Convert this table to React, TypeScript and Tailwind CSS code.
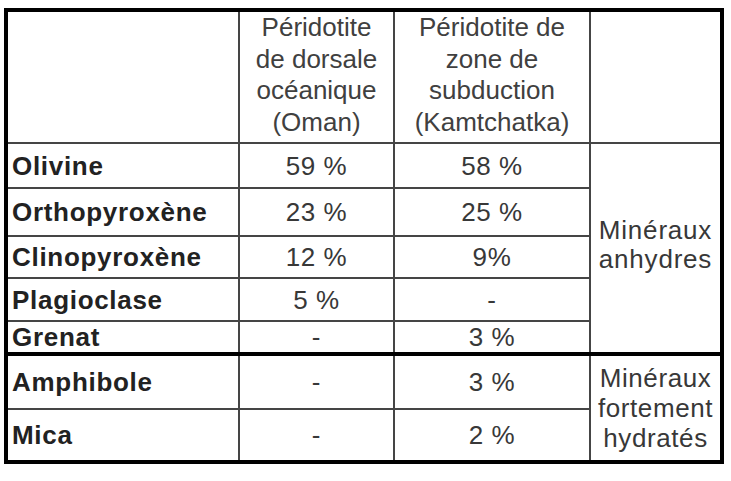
const rows = [
  { name: "Olivine", oman: "59 %", kam: "58 %", h: "h-[45px]" },
  { name: "Orthopyroxène", oman: "23 %", kam: "25 %", h: "h-[48px]" },
  { name: "Clinopyroxène", oman: "12 %", kam: "9%", h: "h-[42px]" },
  { name: "Plagioclase", oman: "5 %", kam: "-", h: "h-[43px]" },
  { name: "Grenat", oman: "-", kam: "3 %", h: "h-[33px]" },
];

const hydrated = [
  { name: "Amphibole", oman: "-", kam: "3 %", h: "h-[55px]" },
  { name: "Mica", oman: "-", kam: "2 %", h: "h-[53px]" },
];

const cell = "border-2 border-[#454545] p-0";
const label = "pl-[4px] text-left font-bold text-[#222] tracking-[0.7px]";
const value = "text-center text-[#383838] tracking-[0.6px]";

export default function App() {
  return (
    <div className="w-[731px] h-[481px] bg-white pl-[4px] pt-[8px] font-['Liberation_Sans',Arial,sans-serif] text-[26px] leading-[30px]">
      <table className="table-fixed border-collapse border-4 border-black w-[718px] font-['Liberation_Sans',Arial,sans-serif]">
        <colgroup>
          <col className="w-[233px]" />
          <col className="w-[155px]" />
          <col className="w-[196px]" />
          <col className="w-[132px]" />
        </colgroup>
        <tbody>
          <tr className="h-[133px]">
            <td className={cell}></td>
            <td className={`${cell} align-top text-center text-[#404040] leading-[31.7px]`}>
              Péridotite
              <br />
              de dorsale
              <br />
              océanique
              <br />
              (Oman)
            </td>
            <td className={`${cell} align-top text-center text-[#404040] leading-[31.7px]`}>
              Péridotite de
              <br />
              zone de
              <br />
              subduction
              <br />
              (Kamtchatka)
            </td>
            <td className={cell}></td>
          </tr>
          {rows.map((r, i) => (
            <tr key={r.name} className={`${r.h} ${i === rows.length - 1 ? "border-b-4 border-b-black" : ""}`}>
              <td className={`${cell} ${label}`}>{r.name}</td>
              <td className={`${cell} ${value}`}>{r.oman}</td>
              <td className={`${cell} ${value}`}>{r.kam}</td>
              {i === 0 && (
                <td
                  rowSpan={rows.length}
                  className={`${cell} pb-[6px] text-center text-[#383838] leading-[29px] tracking-[0.8px]`}
                >
                  Minéraux
                  <br />
                  anhydres
                </td>
              )}
            </tr>
          ))}
          {hydrated.map((r, i) => (
            <tr key={r.name} className={r.h}>
              <td className={`${cell} ${label}`}>{r.name}</td>
              <td className={`${cell} ${value}`}>{r.oman}</td>
              <td className={`${cell} ${value}`}>{r.kam}</td>
              {i === 0 && (
                <td
                  rowSpan={hydrated.length}
                  className={`${cell} text-center text-[#383838] leading-[30px] tracking-[0.6px]`}
                >
                  Minéraux
                  <br />
                  fortement
                  <br />
                  hydratés
                </td>
              )}
            </tr>
          ))}
        </tbody>
      </table>
    </div>
  );
}
